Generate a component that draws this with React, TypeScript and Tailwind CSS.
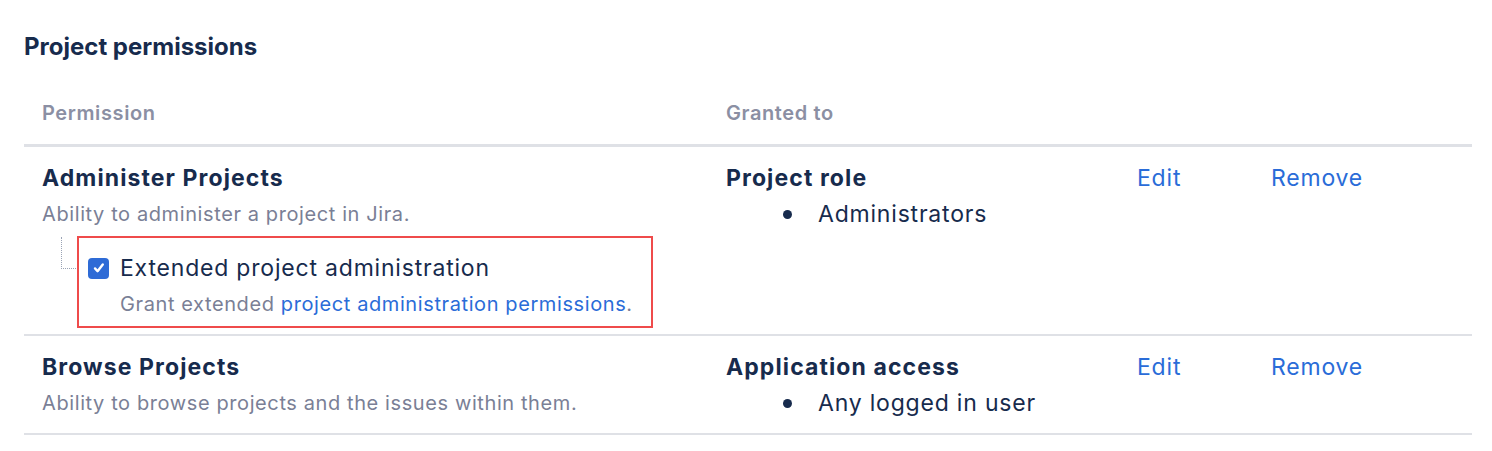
import React from 'react';

// --- Data ---
interface PermissionRow {
    id: string;
    name: string;
    description: string;
    grantType: string;
    grantees: string[];
    extended?: boolean;
}

const ROWS: PermissionRow[] = [
    {
        id: 'admin',
        name: 'Administer Projects',
        description: 'Ability to administer a project in Jira.',
        grantType: 'Project role',
        grantees: ['Administrators'],
        extended: true,
    },
    {
        id: 'browse',
        name: 'Browse Projects',
        description: 'Ability to browse projects and the issues within them.',
        grantType: 'Application access',
        grantees: ['Any logged in user'],
    },
];

const COLS = 'grid grid-cols-[684px_411px_134px_1fr]';
const TITLE = 'text-[23px] leading-9 font-bold tracking-[1.1px] text-[#172b4d]';
const BODY = 'text-[23px] leading-9 tracking-[0.8px]';
const DESC = 'text-[20px] leading-9 tracking-[0.6px] text-[#7a7f96]';

const ExtendedOption: React.FC = () => (
    <div className="relative mt-1 mb-[6px]">
        {/* tree connector */}
        <div className="absolute left-[19px] top-[1px] w-[15px] h-[32px] border-l border-b border-dotted border-[#9aa3b5]" />
        <div className="ml-[35px] w-[576px] border-2 border-[#ef4b4b] pt-3 pb-1 pl-[7px]">
            <div className="flex items-center h-9">
                <span className="w-[21px] h-[21px] ml-[2px] rounded-[4px] bg-[#2e6bd6] flex items-center justify-center">
                    <svg viewBox="0 0 20 20" className="w-[16px] h-[16px]" fill="none" stroke="white" strokeWidth="3" strokeLinecap="round" strokeLinejoin="round">
                        <path d="M5 10.5l3.2 3.5 6.5-8.5" />
                    </svg>
                </span>
                <span className={`ml-[11px] ${BODY} text-[#172b4d]`}>Extended project administration</span>
            </div>
            <div className={`ml-[34px] ${DESC}`}>
                Grant extended <a className="text-[#2a6cd8]">project administration permissions</a>.
            </div>
        </div>
    </div>
);

const App: React.FC = () => {
    return (
        <div className="w-[1492px] h-[451px] bg-white pl-6 pr-5 pt-[31px] font-['Inter',sans-serif]">
            <h2 className="text-[24px] leading-8 font-bold text-[#172b4d]">Project permissions</h2>

            {/* Header */}
            <div className={`${COLS} mt-[32px] pb-[13px] border-b-[3px] border-[#dfe1e6] text-[20px] tracking-[0.6px] font-semibold text-[#8b8fa3] leading-9`}>
                <div className="pl-[18px]">Permission</div>
                <div className="pl-[18px]">Granted to</div>
                <div />
                <div />
            </div>

            {/* Rows */}
            {ROWS.map((row) => (
                <div key={row.id} className={`${COLS} pt-[13px] border-b-2 border-[#dfe1e6] ${row.extended ? '' : 'pb-3'}`}>
                    <div className="pl-[18px]">
                        <div className={TITLE}>{row.name}</div>
                        <div className={DESC}>{row.description}</div>
                        {row.extended && <ExtendedOption />}
                    </div>
                    <div className="pl-[18px]">
                        <div className={TITLE}>{row.grantType}</div>
                        <ul className={`${BODY} text-[#172b4d]`}>
                            {row.grantees.map((g) => (
                                <li key={g} className="flex items-center">
                                    <span className="ml-[57px] w-[9px] h-[9px] rounded-full bg-[#172b4d]" />
                                    <span className="ml-[26px]">{g}</span>
                                </li>
                            ))}
                        </ul>
                    </div>
                    <div className={`pl-[18px] ${BODY} text-[#2a6cd8]`}>Edit</div>
                    <div className={`pl-[18px] ${BODY} text-[#2a6cd8]`}>Remove</div>
                </div>
            ))}
        </div>
    );
};

export default App;
